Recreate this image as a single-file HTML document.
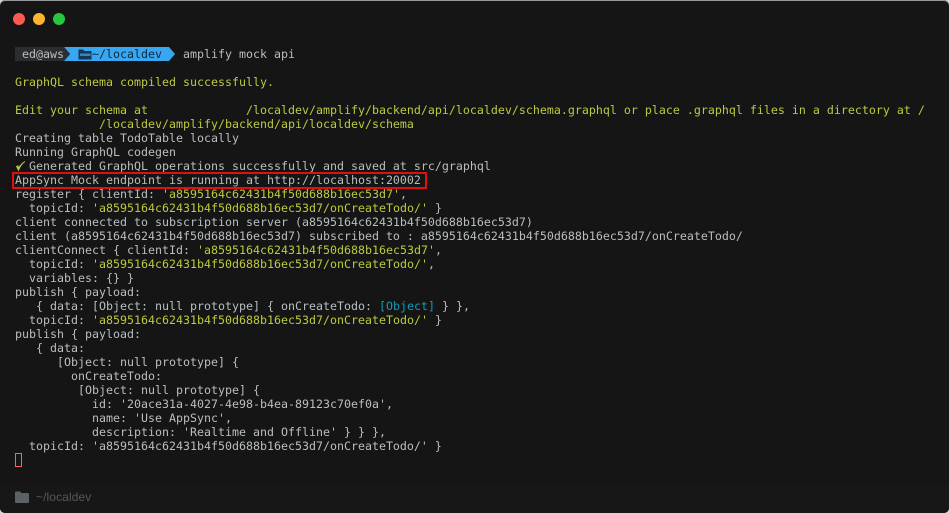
<!DOCTYPE html>
<html>
<head>
<meta charset="utf-8">
<style>
html,body{margin:0;padding:0;width:949px;height:513px;overflow:hidden;background:#d8d8d8}
#win{position:absolute;left:0;top:0;width:949px;height:513px;background:#151515;border-radius:5px;overflow:hidden;box-shadow:inset 0 1px 0 #9a9a9a}
.dot{position:absolute;top:13px;width:12px;height:12px;border-radius:50%}
pre{position:absolute;left:15px;margin:0;font:11.63px/14px "DejaVu Sans Mono",monospace;color:#b9bec0;white-space:pre;height:14px;filter:blur(.2px)}
.y{color:#bdca3e}
.c{color:#0f9fb4}
#status{position:absolute;left:0;top:484px;width:949px;height:29px;background:#171717}
#st{position:absolute;left:36px;top:490px;font:12px/14px "Liberation Sans",sans-serif;color:#55595b;letter-spacing:.1px}
#box{position:absolute;left:12px;top:172px;width:411px;height:13px;border:2px solid #e10f0f}
#cursor{position:absolute;left:15px;top:453px;width:5px;height:12px;border:1px solid #ff5f5f}
</style>
</head>
<body>
<div id="win">
<div class="dot" style="left:13px;background:#ff5a52"></div>
<div class="dot" style="left:33px;background:#fdb52f"></div>
<div class="dot" style="left:53px;background:#27c63f"></div>

<svg style="position:absolute;left:15px;top:47px" width="162" height="14" viewBox="0 0 162 14">
<rect x="0" y="0" width="49" height="14" fill="#2b2e31"/>
<path d="M49 0H154L160 7L154 14H49L55 7Z" fill="#38a6f0"/>
<path d="M49 0L55 7L49 14H48V0Z" fill="#2b2e31"/>
<path d="M63.500 2.500h4.500l1.200 1.500h7.300v8.500h-13z" fill="#17364f"/>
<path d="M65 6.500h10.500v2.500h-10.500z" fill="#38a6f0" opacity=".75"/>
</svg>
<pre style="top:47px;left:22px">ed@aws</pre>
<pre style="top:47px;left:92px;color:#10283c">~/localdev</pre>
<pre style="top:47px;left:183px">amplify mock api</pre>

<pre class="y" style="top:75px">GraphQL schema compiled successfully.</pre>
<pre class="y" style="top:103px">Edit your schema at              /localdev/amplify/backend/api/localdev/schema.graphql or place .graphql files in a directory at /</pre>
<pre class="y" style="top:117px">            /localdev/amplify/backend/api/localdev/schema</pre>
<pre style="top:131px">Creating table TodoTable locally</pre>
<pre style="top:145px">Running GraphQL codegen</pre>
<svg style="position:absolute;left:15px;top:160px" width="12" height="12" viewBox="0 0 12 12"><path d="M1.500 6.500L3.500 10.500C5 6.500 7 3.500 10 1.500C7.500 3 5.300 5.300 3.800 7.800L3 5.800Z" fill="#bdca3e" stroke="#bdca3e" stroke-width=".8"/></svg>
<pre style="top:159px">  Generated GraphQL operations successfully and saved at src/graphql</pre>
<pre style="top:173px">AppSync Mock endpoint is running at http://localhost:20002</pre>
<pre style="top:187px">register { clientId: <span class="y">'a8595164c62431b4f50d688b16ec53d7'</span>,</pre>
<pre style="top:201px">  topicId: <span class="y">'a8595164c62431b4f50d688b16ec53d7/onCreateTodo/'</span> }</pre>
<pre style="top:215px">client connected to subscription server (a8595164c62431b4f50d688b16ec53d7)</pre>
<pre style="top:229px">client (a8595164c62431b4f50d688b16ec53d7) subscribed to : a8595164c62431b4f50d688b16ec53d7/onCreateTodo/</pre>
<pre style="top:243px">clientConnect { clientId: <span class="y">'a8595164c62431b4f50d688b16ec53d7'</span>,</pre>
<pre style="top:257px">  topicId: <span class="y">'a8595164c62431b4f50d688b16ec53d7/onCreateTodo/'</span>,</pre>
<pre style="top:271px">  variables: {} }</pre>
<pre style="top:285px">publish { payload:</pre>
<pre style="top:299px">   { data: [Object: null prototype] { onCreateTodo: <span class="c">[Object]</span> } },</pre>
<pre style="top:313px">  topicId: <span class="y">'a8595164c62431b4f50d688b16ec53d7/onCreateTodo/'</span> }</pre>
<pre style="top:327px">publish { payload:</pre>
<pre style="top:341px">   { data:</pre>
<pre style="top:355px">      [Object: null prototype] {</pre>
<pre style="top:369px">        onCreateTodo:</pre>
<pre style="top:383px">         [Object: null prototype] {</pre>
<pre style="top:397px">           id: '20ace31a-4027-4e98-b4ea-89123c70ef0a',</pre>
<pre style="top:411px">           name: 'Use AppSync',</pre>
<pre style="top:425px">           description: 'Realtime and Offline' } } },</pre>
<pre style="top:439px">  topicId: 'a8595164c62431b4f50d688b16ec53d7/onCreateTodo/' }</pre>
<div id="cursor"></div>
<div id="box"></div>

<div id="status"></div>
<svg style="position:absolute;left:15px;top:491px" width="14" height="12" viewBox="0 0 14 12"><path d="M0 1.500Q0 .5 1 .5H5L6.500 2H13Q14 2 14 3V11Q14 12 13 12H1Q0 12 0 11Z" fill="#5b6265"/></svg>
<div id="st">~/localdev</div>
</div>
</body>
</html>
